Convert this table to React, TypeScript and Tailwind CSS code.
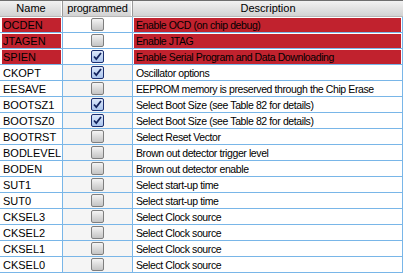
import React from "react";

type Fuse = { name: string; on: boolean; desc: string; hot?: boolean };

const fuses: Fuse[] = [
  { name: "OCDEN", on: false, desc: "Enable OCD (on chip debug)", hot: true },
  { name: "JTAGEN", on: false, desc: "Enable JTAG", hot: true },
  { name: "SPIEN", on: true, desc: "Enable Serial Program and Data Downloading", hot: true },
  { name: "CKOPT", on: true, desc: "Oscillator options" },
  { name: "EESAVE", on: false, desc: "EEPROM memory is preserved through the Chip Erase" },
  { name: "BOOTSZ1", on: true, desc: "Select Boot Size (see Table 82 for details)" },
  { name: "BOOTSZ0", on: true, desc: "Select Boot Size (see Table 82 for details)" },
  { name: "BOOTRST", on: false, desc: "Select Reset Vector" },
  { name: "BODLEVEL", on: false, desc: "Brown out detector trigger level" },
  { name: "BODEN", on: false, desc: "Brown out detector enable" },
  { name: "SUT1", on: false, desc: "Select start-up time" },
  { name: "SUT0", on: false, desc: "Select start-up time" },
  { name: "CKSEL3", on: false, desc: "Select Clock source" },
  { name: "CKSEL2", on: false, desc: "Select Clock source" },
  { name: "CKSEL1", on: false, desc: "Select Clock source" },
  { name: "CKSEL0", on: false, desc: "Select Clock source" },
];

function Check({ on }: { on: boolean }) {
  if (on) {
    return (
      <div className="w-[13px] h-[13px] rounded-[2px] border border-[#1c2f6e] bg-gradient-to-b from-[#dce8fa] to-[#a9c3ec] flex items-center justify-center">
        <svg width="9" height="9" viewBox="0 0 9 9">
          <path d="M1 4.5 L3.3 7 L8 1" fill="none" stroke="#14245e" strokeWidth="1.8" />
        </svg>
      </div>
    );
  }
  return (
    <div className="w-[13px] h-[13px] rounded-[2px] border border-[#7e7e7e] bg-gradient-to-b from-[#f4f4f4] to-[#c4c4c4]" />
  );
}

export default function App() {
  return (
    <div
      className="w-[403px] h-[273px] bg-white text-[11px] text-black overflow-hidden"
      style={{ fontFamily: '"Liberation Sans", Arial, sans-serif' }}
    >
      {/* Header */}
      <div className="grid grid-cols-[63px_70px_1fr] h-[17px] border-t border-[#6e6e6e] bg-gradient-to-b from-[#f2f2f2] via-[#e2e2e2] to-[#d2d2d2] border-b border-b-[#b8b8b8]">
        <div className="flex items-center justify-center border-r border-[#9a9a9a] shadow-[inset_-1px_0_0_#ffffff] leading-none">Name</div>
        <div className="flex items-center justify-center border-r border-[#9a9a9a] shadow-[inset_-1px_0_0_#ffffff] leading-none tracking-[-0.2px]">programmed</div>
        <div className="flex items-center justify-center leading-none">Description</div>
      </div>

      {/* Rows */}
      {fuses.map((f) => (
        <div key={f.name} className="grid grid-cols-[63px_70px_1fr] h-[16px] border-b border-[#79b6e8]">
          <div className="border-r border-[#79b6e8] pt-[1px] pl-[2px] pr-[1px]">
            <div className={`h-full flex items-center pl-[1px] leading-none ${f.hot ? "bg-[#c1222e]" : ""}`}>{f.name}</div>
          </div>
          <div className={`border-r border-[#79b6e8] flex items-center justify-center ${f.hot ? "bg-white" : "bg-[#f5f5f5]"}`}>
            <Check on={f.on} />
          </div>
          <div className="border-r border-[#79b6e8] pt-[1px] px-[1px]">
            <div className={`h-full flex items-center pl-[2px] leading-none whitespace-nowrap text-[10.5px] tracking-[-0.4px] ${f.hot ? "bg-[#c1222e]" : ""}`}>{f.desc}</div>
          </div>
        </div>
      ))}
    </div>
  );
}
